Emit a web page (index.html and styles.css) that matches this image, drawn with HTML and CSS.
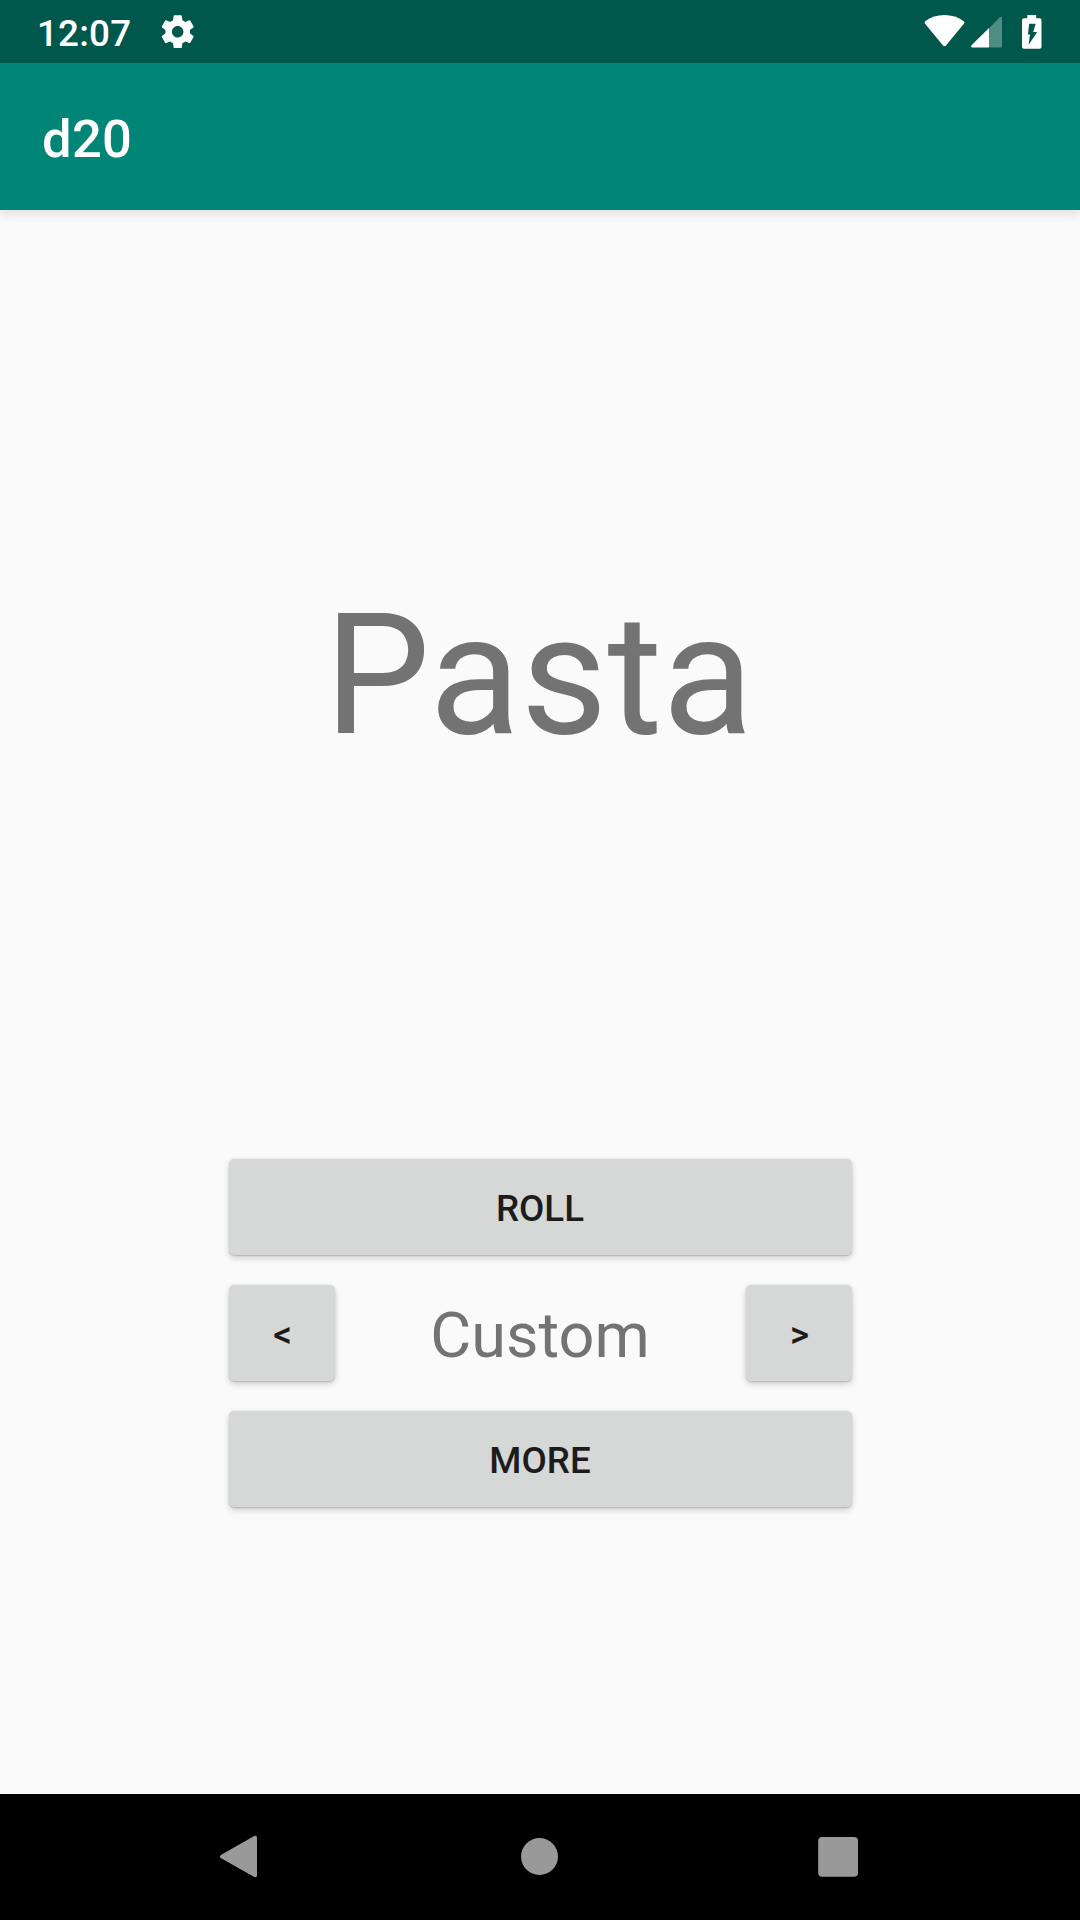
FILE: index.html
```html
<!DOCTYPE html>
<html lang="en">
<head>
<meta charset="utf-8">
<title>d20</title>
<link rel="stylesheet" href="styles.css">
</head>
<body>
<div class="screen">
  <div class="status-bar">
    <span class="clock">12:07</span>
    <svg class="gear" viewBox="0 0 24 24"><path d="M19.43 12.98c.04-.32.07-.64.07-.98s-.03-.66-.07-.98l2.11-1.65c.19-.15.24-.42.12-.64l-2-3.46c-.12-.22-.39-.3-.61-.22l-2.49 1c-.52-.4-1.08-.73-1.69-.98l-.38-2.65A.488.488 0 0 0 14 2h-4c-.25 0-.46.18-.49.42l-.38 2.65c-.61.25-1.17.59-1.69.98l-2.49-1c-.23-.09-.49 0-.61.22l-2 3.46c-.13.22-.07.49.12.64l2.11 1.65c-.04.32-.07.65-.07.98s.03.66.07.98l-2.11 1.65c-.19.15-.24.42-.12.64l2 3.46c.12.22.39.3.61.22l2.49-1c.52.4 1.08.73 1.69.98l.38 2.65c.03.24.24.42.49.42h4c.25 0 .46-.18.49-.42l.38-2.65c.61-.25 1.17-.59 1.69-.98l2.49 1c.23.09.49 0 .61-.22l2-3.46c.12-.22.07-.49-.12-.64l-2.11-1.65zM12 15.5c-1.93 0-3.5-1.57-3.5-3.5s1.57-3.5 3.5-3.5 3.5 1.57 3.5 3.5-1.57 3.5-3.5 3.5z"/></svg>
    <div class="indicators">
      <svg class="wifi" viewBox="0 0 41 34"><path d="M1.200 6.200C12-2 29-2 39.800 6.200q1 1 .3 2.200L22 30.500q-1.500 1.500-3 0L.9 8.400q-.7-1.200.3-2.200z"/></svg>
      <svg class="signal" viewBox="0 0 31 34"><path class="faint" d="M18 13.500 28.500 2.400q2.500-1.800 2.500.8V31q0 1.500-1.500 1.500H18z"/><path d="M18 13V32.500H1.500q-2.200-.4-1-2.200z"/></svg>
      <svg class="battery" viewBox="0 0 20 34"><path fill-rule="evenodd" d="M5.300 0h8.900v3.200h3.300q2 0 2 2V32q0 1.700-2 1.700H2q-2 0-2-1.700V5.200q0-2 2-2h3.300zM7.200 8.700 5.900 19.500H8L6.500 30 15.200 17h-4l2.500-8.300z"/></svg>
    </div>
  </div>
  <header class="app-bar"><h1 class="title">d20</h1></header>
  <main class="content">
    <div class="result">Pasta</div>
    <div class="controls">
      <button class="button">ROLL</button>
      <div class="picker">
        <button class="button step">&lt;</button>
        <span class="mode">Custom</span>
        <button class="button step">&gt;</button>
      </div>
      <button class="button">MORE</button>
    </div>
  </main>
  <nav class="nav-bar">
    <svg class="nav-icon" viewBox="0 0 44 44"><path d="M36.800 1.300q3.200-1.700 3.200 1.500V40.200q0 3.200-3.200 1.500L4.200 23.300q-2.600-1.800 0-3.600z"/></svg>
    <svg class="nav-icon" viewBox="0 0 44 44"><circle cx="22.500" cy="21.500" r="18.500"/></svg>
    <svg class="nav-icon" viewBox="0 0 44 44"><rect x="2.200" y="2" width="39.800" height="39.800" rx="4"/></svg>
  </nav>
</div>
</body>
</html>
```
FILE: styles.css
```css
* { box-sizing: border-box; }
body { margin: 0; font-family: Roboto, sans-serif; }
.screen {
  width: 1080px;
  height: 1920px;
  display: flex;
  flex-direction: column;
  background: #fafafa;
  overflow: hidden;
}
.status-bar {
  height: 63px;
  flex: none;
  display: flex;
  align-items: center;
  padding: 0 38px 0 37px;
  position: relative;
  background: #00574b;
  color: #fff;
}
.clock { font-size: 36.75px; font-weight: 500; line-height: 43px; padding-top: 3px; letter-spacing: .2px; }
svg { display: block; fill: #fff; }
.gear { width: 39.4px; height: 39.4px; margin-left: 26.8px; }
.indicators { display: flex; margin-left: auto; align-items: flex-start; }
.wifi { width: 41px; height: 34px; }
.signal { width: 31px; height: 34px; margin-left: 6px; }
.faint { fill: #4f8c83; }
.battery { width: 20px; height: 34px; margin-left: 20px; }
.app-bar {
  height: 147px;
  flex: none;
  display: flex;
  align-items: center;
  padding: 5px 42px 0;
  background: #008577;
  color: #fff;
  box-shadow: 0 4px 10px rgba(0, 0, 0, .11);
}
.title { margin: 0; font-size: 52.5px; font-weight: 500; line-height: 62px; letter-spacing: .3px; }
.content {
  flex: 1;
  display: flex;
  flex-direction: column;
  align-items: center;
}
.result {
  margin-top: 367px;
  padding-right: 2px;
  font-size: 168px;
  line-height: 197px;
  color: #737373;
}
.controls {
  width: 623px;
  margin: 385px 0 0 1px;
  display: flex;
  flex-direction: column;
  gap: 30px;
}
.button {
  height: 96px;
  padding: 2px 1px 0 0;
  border: 0;
  border-radius: 5px;
  background: #d6d8d7;
  color: #1c1c1c;
  font: 500 36.75px/43px Roboto, sans-serif;
  box-shadow: 0 1px 1px rgba(0, 0, 0, .12), 0 3px 6px rgba(0, 0, 0, .18), 0 0 3px rgba(0, 0, 0, .06);
}
.picker { height: 96px; display: flex; justify-content: space-between; align-items: center; }
.step { width: 106px; padding: 2px 0 0 1px; }
.mode { padding: 6px 1px 0 0; font-size: 63px; line-height: 74px; color: #737373; }
.nav-bar {
  height: 126px;
  flex: none;
  display: flex;
  justify-content: space-between;
  align-items: center;
  padding: 0 220px 0 217px;
  background: #000;
}
.nav-icon { width: 44px; height: 44px; fill: #999; }
```
